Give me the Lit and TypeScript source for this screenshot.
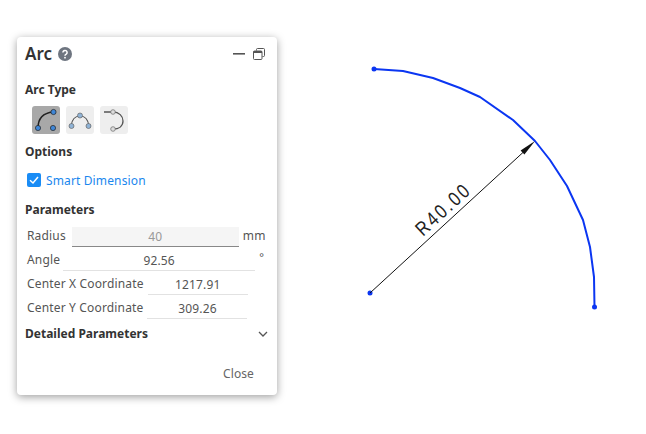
import { LitElement, html, css, svg } from "lit";
import { customElement } from "lit/decorators.js";

@customElement("app-root")
export class AppRoot extends LitElement {
  static styles = css`
    :host { display: block; width: 646px; height: 434px; position: relative; background: #fff; overflow: hidden; font-family: "Noto Sans", "Open Sans", sans-serif; color: #444; }
    .canvas { position: absolute; left: 0; top: 0; width: 646px; height: 434px; }
    .dim { font-family: "Liberation Sans", sans-serif; font-size: 20px; letter-spacing: 3px; fill: #222; }
    .panel { position: absolute; left: 17px; top: 37px; width: 260px; height: 358px; box-sizing: border-box; background: #fff; border-radius: 4px; box-shadow: 0 2px 8px rgba(0,0,0,.38); padding: 0 8px; display: flex; flex-direction: column; }
    .head { display: flex; align-items: center; height: 34px; }
    .title { font-size: 17px; font-weight: 600; color: #333; line-height: 34px; }
    .help { margin-left: 6px; display: block; }
    .spacer { flex: 1; }
    .min { margin-right: 8px; display: block; }
    .restore { margin-right: 4px; display: block; }
    .h { font-size: 12px; font-weight: 700; color: #333; line-height: 18px; }
    .h1 { margin-top: 10px; }
    .types { display: flex; gap: 6px; margin: 7px 0 0 7px; }
    .type { width: 28px; height: 28px; border-radius: 3px; background: #eee; display: block; }
    .type.on { background: #a8a8a8; }
    .h2 { margin-top: 9px; }
    .check { display: flex; align-items: center; margin: 10px 0 0 2px; height: 18px; color: #1a87ee; font-size: 12px; letter-spacing: .13px; gap: 5px; }
    .box { width: 14px; height: 14px; border-radius: 2px; background: #1a8cf5; display: block; }
    .h3 { margin-top: 12px; }
    .row { display: flex; align-items: center; height: 24px; font-size: 12px; letter-spacing: .16px; color: #555; padding-left: 2px; }
    .rows { margin-top: 4px; }
    .lbl { white-space: nowrap; }
    .val { height: 19px; line-height: 19px; text-align: center; box-sizing: content-box; border-bottom: 1px solid #e2e2e2; color: #555; margin-top: 4px; }
    .r1 .val { width: 167px; margin-left: 6px; background: #f5f5f5; border-bottom-color: #888; color: #999; }
    .r2 .val { width: 192px; margin-left: 3px; }
    .r3 .val, .r4 .val { width: 100px; margin-left: 4px; }
    .unit { margin-left: 4px; }
    .r2 .unit { margin-left: 4px; font-size: 11px; margin-top: -6px; }
    .details { display: flex; align-items: center; justify-content: space-between; margin-top: 5px; height: 20px; }
    .chev { margin-right: 1px; display: block; }
    .foot { display: flex; justify-content: flex-end; margin-top: 21px; padding-right: 15px; font-size: 12px; letter-spacing: .1px; color: #666; line-height: 18px; }
  `;

  private canvas() {
    const pts = "374,69 403,71 433,78 460,88 480,97 513,120 535,141 550,160 567,186 583,220 590,247 594,277 594.5,307";
    return svg`
      <polyline points=${pts} fill="none" stroke="#0b36f2" stroke-width="2" stroke-linejoin="round"/>
      <circle cx="374" cy="69" r="2.5" fill="#0b36f2"/>
      <circle cx="594.5" cy="307" r="2.5" fill="#0b36f2"/>
      <circle cx="370" cy="293" r="2.5" fill="#0b36f2"/>
      <line x1="370" y1="293" x2="530" y2="146" stroke="#111" stroke-width="1"/>
      <polygon points="535,141 524.4,154.6 520.6,150.4" fill="#111"/>
      <text class="dim" transform="translate(423,237) rotate(-42.5) scale(.82,1)">R40.00</text>
    `;
  }

  render() {
    return html`
      <svg class="canvas" viewBox="0 0 646 434">${this.canvas()}</svg>
      <section class="panel">
        <div class="head">
          <span class="title">Arc</span>
          <svg class="help" width="14" height="14" viewBox="0 0 14 14"><circle cx="7" cy="7" r="7" fill="#6e7580"/><path d="M4.9 5.4a2.1 2 0 1 1 3.3 1.7c-.8.5-1.2.9-1.2 1.6" fill="none" stroke="#fff" stroke-width="1.5"/><circle cx="7" cy="10.7" r=".9" fill="#fff"/></svg>
          <span class="spacer"></span>
          <svg class="min" width="12" height="2" viewBox="0 0 12 2"><rect width="12" height="1.6" fill="#555"/></svg>
          <svg class="restore" width="12" height="12" viewBox="0 0 12 12" fill="none" stroke="#555" stroke-width="1"><path d="M3.5 2.5V1.5a1 1 0 0 1 1-1h6a1 1 0 0 1 1 1v6a1 1 0 0 1-1 1H9.5"/><rect x=".5" y="3" width="8.5" height="8.5" rx="1"/><rect x=".5" y="3" width="8.5" height="2" fill="#555" stroke="none"/></svg>
        </div>
        <div class="h h1">Arc Type</div>
        <div class="types">
          <svg class="type on" viewBox="0 0 28 28"><path d="M6 22C6 13 11 7 21 6" fill="none" stroke="#222" stroke-width="1.5"/><circle cx="21.5" cy="6" r="2.6" fill="#3f86d6" stroke="#222" stroke-width=".7"/><circle cx="6" cy="22" r="2.6" fill="#3f86d6" stroke="#222" stroke-width=".7"/><circle cx="21" cy="22" r="2.6" fill="#3f86d6" stroke="#222" stroke-width=".7"/></svg>
          <svg class="type" viewBox="0 0 28 28"><path d="M5 20C6 13 10 10 14 10S22 13 23 20" fill="none" stroke="#555" stroke-width="1.2"/><circle cx="14" cy="9.5" r="2.5" fill="#8fb3d6" stroke="#666" stroke-width=".7"/><circle cx="5.5" cy="20" r="2.5" fill="#8fb3d6" stroke="#666" stroke-width=".7"/><circle cx="22.5" cy="20" r="2.5" fill="#8fb3d6" stroke="#666" stroke-width=".7"/></svg>
          <svg class="type" viewBox="0 0 28 28"><path d="M4 6H13C19 6 23 10 23 15S19 23 13 23" fill="none" stroke="#555" stroke-width="1.3"/><circle cx="13" cy="6" r="2.3" fill="#ddd" stroke="#777" stroke-width=".8"/><circle cx="13" cy="23" r="2.3" fill="#ddd" stroke="#777" stroke-width=".8"/></svg>
        </div>
        <div class="h h2">Options</div>
        <label class="check">
          <svg class="box" viewBox="0 0 14 14"><path d="M3 7.2 6 10l5-6" fill="none" stroke="#fff" stroke-width="1.5"/></svg>
          <span>Smart Dimension</span>
        </label>
        <div class="h h3">Parameters</div>
        <div class="rows">
          <div class="row r1"><span class="lbl">Radius</span><span class="val">40</span><span class="unit">mm</span></div>
          <div class="row r2"><span class="lbl">Angle</span><span class="val">92.56</span><span class="unit">°</span></div>
          <div class="row r3"><span class="lbl">Center X Coordinate</span><span class="val">1217.91</span></div>
          <div class="row r4"><span class="lbl">Center Y Coordinate</span><span class="val">309.26</span></div>
        </div>
        <div class="details">
          <span class="h">Detailed Parameters</span>
          <svg class="chev" width="10" height="6" viewBox="0 0 10 6"><path d="M1 1l4 4 4-4" fill="none" stroke="#555" stroke-width="1.3"/></svg>
        </div>
        <div class="foot">Close</div>
      </section>
    `;
  }
}
